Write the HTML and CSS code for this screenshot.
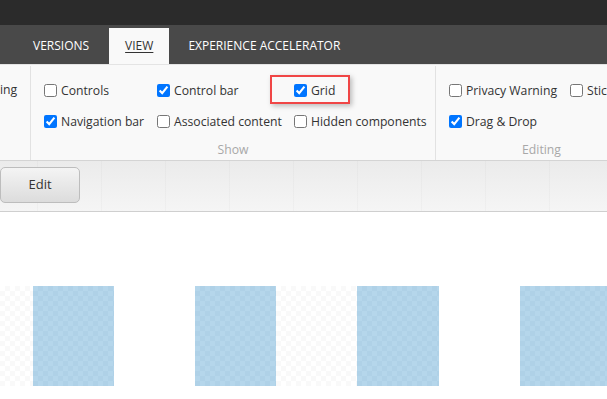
FILE: index.html
```html
<!DOCTYPE html>
<html>
<head>
<meta charset="utf-8">
<link rel="stylesheet" href="styles.css">
</head>
<body>
<div class="topbar"></div>
<div class="tabbar">
  <div class="tab">VERSIONS</div>
  <div class="tab active"><span>VIEW</span></div>
  <div class="tab">EXPERIENCE ACCELERATOR</div>
</div>
<div class="ribbon">
  <div class="group g1">
    <div class="cut">ing</div>
  </div>
  <div class="group g2">
    <div class="items">
      <label class="item c1"><input type="checkbox"><span>Controls</span></label>
      <label class="item c2"><input type="checkbox" checked><span>Control bar</span></label>
      <label class="item c3 grid-item"><input type="checkbox" checked><span>Grid</span><i class="highlight"></i></label>
      <label class="item c1"><input type="checkbox" checked><span>Navigation bar</span></label>
      <label class="item c2"><input type="checkbox"><span>Associated content</span></label>
      <label class="item c3"><input type="checkbox"><span>Hidden components</span></label>
    </div>
    <div class="glabel">Show</div>
  </div>
  <div class="group g3">
    <div class="items items3">
      <label class="item"><input type="checkbox"><span>Privacy Warning</span></label>
      <label class="item"><input type="checkbox"><span>Sticky</span></label>
      <label class="item"><input type="checkbox" checked><span>Drag &amp; Drop</span></label>
    </div>
    <div class="glabel">Editing</div>
  </div>
</div>
<div class="toolbar">
  <button class="edit">Edit</button>
</div>
<div class="canvas">
  <div class="cols">
    <div class="chk"></div>
    <div class="blue"></div>
    <div class="plain"></div>
    <div class="blue"></div>
    <div class="chk"></div>
    <div class="blue"></div>
    <div class="plain"></div>
    <div class="blue"></div>
  </div>
</div>
</body>
</html>
```
FILE: styles.css
```css
* { box-sizing: border-box; }
html, body { margin: 0; padding: 0; }
body {
  width: 607px;
  height: 399px;
  overflow: hidden;
  background: #fff;
  font-family: "Open Sans", "Noto Sans", sans-serif;
  color: #333;
}
.topbar { height: 25px; background: #2b2b2b; }
.tabbar {
  height: 39px;
  background: #494949;
  display: flex;
  align-items: flex-end;
  padding-left: 13px;
}
.tab {
  height: 36px;
  display: flex;
  align-items: center;
  padding: 0 20px 2px;
  color: #fff;
  font-size: 12px;
  white-space: nowrap;
}
.tab.active {
  background: #f9f9f9;
  color: #333;
  padding: 0 16px 2px;
}
.tab.active + .tab { padding-left: 19px; }
.tab.active span { text-decoration: underline; text-underline-offset: 2px; }
.ribbon {
  height: 97px;
  background: #f9f9f9;
  border-top: 1px solid #e4e4e4;
  border-bottom: 1px solid #d4d4d4;
  display: flex;
  overflow: hidden;
}
.group {
  position: relative;
  flex-shrink: 0;
  height: 100%;
  display: flex;
  flex-direction: column;
  padding-top: 14px;
  padding-left: 13px;
  margin-top: 1px;
}
.g1 { width: 31px; border-right: 1px solid #e2e2e2; padding-left: 0; }
.g2 { width: 405px; border-right: 1px solid #e2e2e2; }
.g3 { width: 250px; }
.cut { font-size: 12.2px; line-height: 20px; text-align: right; padding-right: 13px; }
.items {
  display: grid;
  grid-template-columns: 113px 137px 130px;
  row-gap: 11px;
}
.items3 { grid-template-columns: 121px 100px; }
.item {
  display: flex;
  align-items: center;
  height: 20px;
  font-size: 12.2px;
  white-space: nowrap;
  position: relative;
}
.item input {
  margin: 0 4px 0 0;
  width: 13px;
  height: 13px;
  flex-shrink: 0;
}
.glabel {
  margin-top: auto;
  margin-bottom: 3px;
  text-align: center;
  color: #a8a8a8;
  font-size: 12.2px;
  padding-right: 13px;
}
.g3 .glabel { width: 198px; }
.highlight {
  position: absolute;
  left: -24px;
  top: -5px;
  width: 80px;
  height: 29px;
  border: 2px solid #f04646;
  box-shadow: 2px 2px 5px rgba(0,0,0,0.25);
}
.toolbar {
  height: 51px;
  border-bottom: 1px solid #cfcfcf;
  background:
    repeating-linear-gradient(to right, transparent 0 37px, rgba(0,0,0,0.025) 37px 38px, transparent 38px 64px),
    linear-gradient(#ebebeb, #f5f5f5);
  padding-top: 6px;
}
.edit {
  display: block;
  width: 80px;
  height: 36px;
  margin: 0;
  border: 1px solid #bdbdbd;
  border-radius: 5px;
  background: linear-gradient(#f4f4f4, #dcdcdc);
  font-family: "Open Sans", "Noto Sans", sans-serif;
  font-size: 13px;
  color: #333;
  padding: 0 0 2px 0;
}
.canvas {
  padding-top: 74px;
}
.cols {
  height: 100px;
  display: grid;
  grid-template-columns: 33px 81px 81px 81px 81px 82px 81px 1fr;
}
.chk {
  background-color: #fff;
  background-image: conic-gradient(#f9f9f9 25%, transparent 0 50%, #f9f9f9 0 75%, transparent 0);
  background-size: 10px 10px;
}
.plain { background: #fff; }
.blue {
  background-color: #b5d6eb;
  background-image: conic-gradient(#afd1e7 25%, transparent 0 50%, #afd1e7 0 75%, transparent 0);
  background-size: 10px 10px;
}
```
